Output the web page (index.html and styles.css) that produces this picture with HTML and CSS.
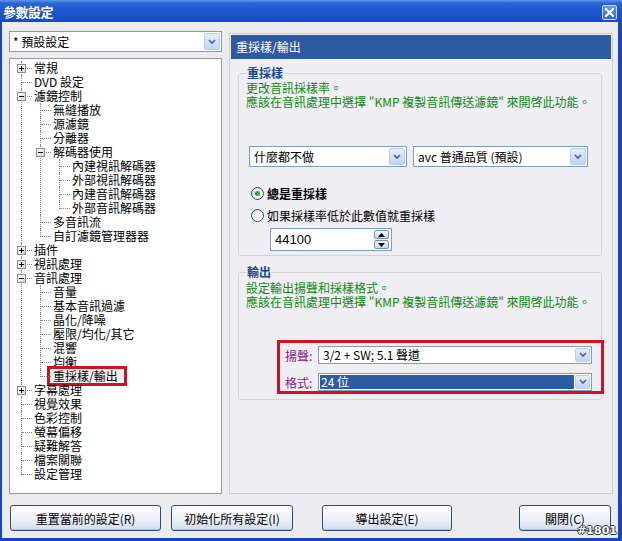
FILE: index.html
```html
<!DOCTYPE html>
<html lang="zh-Hant">

<head>
  <meta charset="UTF-8">
  <title>參數設定</title>
  <link rel="stylesheet" href="styles.css">
</head>

<body>
<div class="window">

  <!-- title bar -->
  <div class="titlebar">
    <span class="title">參數設定</span>
    <span class="close">
      <svg viewBox="0 0 10 10" width="9" height="9">
        <path d="M1 1 L9 9 M9 1 L1 9" stroke="#fff" stroke-width="2.4" stroke-linecap="square"></path>
      </svg>
    </span>
  </div>

  <div class="content">

    <!-- left side -->
    <div class="side">
      <div class="combo preset">
        <span class="combo-text">* 預設設定</span>
        <span class="drop"><svg viewBox="0 0 8 6" width="8" height="6"><path d="M1 1 L4 4 L7 1" fill="none" stroke="#4d6185" stroke-width="1.6"></path></svg></span>
      </div>

      <div class="tree">
        <ul>
          <li><div class="row"><span class="toggle plus"></span>常規</div></li>
          <li><div class="row">DVD 設定</div></li>
          <li><div class="row"><span class="toggle minus"></span>濾鏡控制</div>
            <ul>
              <li><div class="row">無縫播放</div></li>
              <li><div class="row">源濾鏡</div></li>
              <li><div class="row">分離器</div></li>
              <li><div class="row"><span class="toggle minus"></span>解碼器使用</div>
                <ul>
                  <li><div class="row">內建視訊解碼器</div></li>
                  <li><div class="row">外部視訊解碼器</div></li>
                  <li><div class="row">內建音訊解碼器</div></li>
                  <li><div class="row">外部音訊解碼器</div></li>
                </ul>
              </li>
              <li><div class="row">多音訊流</div></li>
              <li><div class="row">自訂濾鏡管理器器</div></li>
            </ul>
          </li>
          <li><div class="row"><span class="toggle plus"></span>插件</div></li>
          <li><div class="row"><span class="toggle plus"></span>視訊處理</div></li>
          <li><div class="row"><span class="toggle minus"></span>音訊處理</div>
            <ul>
              <li><div class="row">音量</div></li>
              <li><div class="row">基本音訊過濾</div></li>
              <li><div class="row">晶化/降噪</div></li>
              <li><div class="row">壓限/均化/其它</div></li>
              <li><div class="row">混響</div></li>
              <li><div class="row">均衡</div></li>
              <li><div class="row"><span class="selected">重採樣/輸出</span></div></li>
            </ul>
          </li>
          <li><div class="row"><span class="toggle plus"></span>字幕處理</div></li>
          <li><div class="row">視覺效果</div></li>
          <li><div class="row">色彩控制</div></li>
          <li><div class="row">螢幕偏移</div></li>
          <li><div class="row">疑難解答</div></li>
          <li><div class="row">檔案關聯</div></li>
          <li><div class="row">設定管理</div></li>
        </ul>
      </div>
    </div>

    <!-- right side -->
    <div class="panel">
      <div class="panel-head">重採樣/輸出</div>

      <fieldset class="group">
        <legend>重採樣</legend>
        <p class="note">更改音訊採樣率。<br>應該在音訊處理中選擇 "KMP 複製音訊傳送濾鏡" 來開啓此功能。</p>

        <div class="combo-row">
          <div class="combo mode">
            <span class="combo-text">什麼都不做</span>
            <span class="drop"><svg viewBox="0 0 8 6" width="8" height="6"><path d="M1 1 L4 4 L7 1" fill="none" stroke="#4d6185" stroke-width="1.6"></path></svg></span>
          </div>
          <div class="combo quality">
            <span class="combo-text">avc 普通品質 (預設)</span>
            <span class="drop"><svg viewBox="0 0 8 6" width="8" height="6"><path d="M1 1 L4 4 L7 1" fill="none" stroke="#4d6185" stroke-width="1.6"></path></svg></span>
          </div>
        </div>

        <div class="radio checked"><span class="dot"></span><b>總是重採樣</b></div>
        <div class="radio"><span class="dot"></span>如果採樣率低於此數值就重採樣</div>

        <div class="spin">
          <span class="spin-text">44100</span>
          <span class="spin-btns">
            <span class="spin-btn"><svg viewBox="0 0 7 4" width="7" height="4"><path d="M0 4 L3.5 0 L7 4 Z" fill="#000"></path></svg></span>
            <span class="spin-btn"><svg viewBox="0 0 7 4" width="7" height="4"><path d="M0 0 L3.5 4 L7 0 Z" fill="#000"></path></svg></span>
          </span>
        </div>
      </fieldset>

      <fieldset class="group output">
        <legend>輸出</legend>
        <p class="note">設定輸出揚聲和採樣格式。<br>應該在音訊處理中選擇 "KMP 複製音訊傳送濾鏡" 來開啓此功能。</p>

        <div class="mark">
          <div class="field">
            <span class="label">揚聲:</span>
            <div class="combo small">
              <span class="combo-text">3/2 + SW; 5.1 聲道</span>
              <span class="drop"><svg viewBox="0 0 8 6" width="8" height="6"><path d="M1 1 L4 4 L7 1" fill="none" stroke="#4d6185" stroke-width="1.6"></path></svg></span>
            </div>
          </div>
          <div class="field">
            <span class="label">格式:</span>
            <div class="combo small focus">
              <span class="combo-text">24 位</span>
              <span class="drop"><svg viewBox="0 0 8 6" width="8" height="6"><path d="M1 1 L4 4 L7 1" fill="none" stroke="#4d6185" stroke-width="1.6"></path></svg></span>
            </div>
          </div>
        </div>
      </fieldset>
    </div>
  </div>

  <!-- buttons -->
  <div class="buttons">
    <button class="btn reset">重置當前的設定(R)</button>
    <button class="btn init">初始化所有設定(I)</button>
    <button class="btn export">導出設定(E)</button>
    <button class="btn close-btn">關閉(C)</button>
  </div>

  <span class="stamp">#1801</span>
</div>
</body>

</html>
```

FILE: styles.css
```css
*,
*::before,
*::after {
  box-sizing: border-box;
}

body {
  margin: 0;
  font-family: "Noto Sans CJK TC", "Liberation Sans", sans-serif;
  font-size: 12px;
  color: #000;
}

.window {
  position: relative;
  width: 622px;
  height: 541px;
  display: flex;
  flex-direction: column;
  background: #ecebef;
  border: 3px solid #1548c0;
  border-top: 0;
  border-left-width: 2px;
  border-right-width: 4px;
}

/* title bar */

.titlebar {
  height: 22px;
  margin: 0 -4px 0 -2px;
  display: flex;
  align-items: center;
  justify-content: space-between;
  padding: 0 5px 0 3px;
  background: linear-gradient(#5d97ee 0, #2d66d6 3px, #1d55cc 50%, #164cc2 100%);
}

.title {
  color: #fff;
  font-weight: bold;
  font-size: 13px;
  letter-spacing: -0.5px;
}

.close {
  width: 15px;
  height: 15px;
  margin-top: 3px;
  display: grid;
  place-items: center;
  background: linear-gradient(#6b9ae8, #3468d0);
  border: 1px solid #c8d8f4;
  border-radius: 2px;
}

/* main area */

.content {
  display: grid;
  grid-template-columns: 213px 384px;
  gap: 7px;
  padding: 9px 0 0 7px;
  height: 472px;
}

.side {
  display: flex;
  flex-direction: column;
  gap: 6px;
}

.combo {
  display: flex;
  align-items: center;
  height: 21px;
  background: #fff;
  border: 1px solid #7f9db9;
  padding: 1px;
}

.combo-text {
  flex: 1;
  padding-left: 3px;
  white-space: nowrap;
  line-height: 15px;
}

.drop {
  width: 16px;
  height: 100%;
  display: grid;
  place-items: center;
  background: linear-gradient(#e6eefc, #c1d3fb);
  border: 1px solid #b8cbf3;
  border-radius: 2px;
}

.preset .combo-text {
  padding-left: 2px;
}

/* tree */

.tree {
  flex: 1;
  background: #fff;
  border: 1px solid #9a9a9a;
  padding-top: 2px;
}

.tree ul {
  list-style: none;
  margin: 0;
  padding: 0;
}

.tree ul ul {
  margin-left: 19px;
}

.tree li {
  position: relative;
}

.tree li::before {
  content: "";
  position: absolute;
  left: 11px;
  top: 0;
  bottom: 0;
  border-left: 1px dotted #8a8a8a;
}

.tree li:last-child::before {
  bottom: auto;
  height: 8px;
}

.row {
  position: relative;
  height: 14px;
  line-height: 14px;
  padding-left: 24px;
  white-space: nowrap;
}

.row::before {
  content: "";
  position: absolute;
  left: 12px;
  top: 7px;
  width: 10px;
  border-top: 1px dotted #8a8a8a;
}

.toggle {
  position: absolute;
  left: 7px;
  top: 3px;
  width: 9px;
  height: 9px;
  z-index: 1;
  background: linear-gradient(135deg, #fff, #d8d5cc);
  border: 1px solid #8c8c8c;
}

.toggle::before,
.toggle::after {
  content: "";
  position: absolute;
  background: #000;
}

.toggle::before {
  left: 1px;
  top: 3px;
  width: 5px;
  height: 1px;
}

.toggle.plus::after {
  left: 3px;
  top: 1px;
  width: 1px;
  height: 5px;
}

.selected {
  display: inline-block;
  margin-left: -3px;
  padding: 0 6px 0 3px;
  background: #f4f2f2;
  outline: 3px solid #d2121e;
}

/* right panel */

.panel {
  margin-top: 2px;
  height: 461px;
  border: 1px solid #cfced4;
  background: #efeef2;
  padding: 1px 1px 0 1px;
}

.panel-head {
  height: 24px;
  line-height: 24px;
  padding-left: 5px;
  background: #2e5aa4;
  color: #fff;
}

.group {
  margin: 7px 9px 0 7px;
  padding: 0 7px 4px 7px;
  border: 1px solid #d4d3da;
  border-radius: 3px;
  min-width: 0;
}

.group legend {
  padding: 0 1px;
  line-height: 14px;
  font-weight: bold;
  color: #1c4690;
}

.note {
  margin: 1px 0 0 0;
  line-height: 14px;
  color: #0f8a14;
  white-space: nowrap;
}

.combo-row {
  display: flex;
  gap: 6px;
  margin: 37px 0 0 3px;
}

.combo.mode {
  width: 158px;
}

.combo.quality {
  width: 175px;
}

.radio {
  display: flex;
  align-items: center;
  gap: 3px;
  height: 16px;
  margin-top: 6px;
  margin-left: 5px;
}

.radio.checked {
  margin-top: 18px;
}

.dot {
  width: 13px;
  height: 13px;
  display: grid;
  place-items: center;
  border: 1px solid #1d5281;
  border-radius: 50%;
  background: linear-gradient(135deg, #dcdcd6, #fff);
}

.radio.checked .dot::after {
  content: "";
  width: 5px;
  height: 5px;
  border-radius: 50%;
  background: #2fa52f;
}

.spin {
  display: flex;
  align-items: center;
  width: 122px;
  height: 23px;
  margin: 5px 0 0 24px;
  background: #fff;
  border: 1px solid #7f9db9;
  padding: 1px 2px 1px 1px;
}

.spin-text {
  flex: 1;
  padding-left: 3px;
  font-family: "Liberation Sans", sans-serif;
  font-size: 13px;
}

.spin-btns {
  display: flex;
  flex-direction: column;
  gap: 1px;
}

.spin-btn {
  width: 15px;
  height: 9px;
  display: grid;
  place-items: center;
  background: linear-gradient(#f4f6fb, #c9d4ea);
  border: 1px solid #7a8db0;
  border-radius: 2px;
}

/* output group */

.group.output {
  margin-top: 9px;
  padding-bottom: 5px;
}

.group.output .note {
  margin-top: 2px;
}

.mark {
  width: 327px;
  margin: 31px 0 0 31px;
  padding: 3px 9px 0 5px;
  border: 3px solid #d2121e;
  display: flex;
  flex-direction: column;
  gap: 9px;
}

.field {
  display: flex;
  align-items: center;
}

.label {
  width: 33px;
  color: #8a1a8a;
}

.combo.small {
  flex: 1;
  height: 18px;
}

.combo.small .combo-text {
  line-height: 14px;
}

.combo.small .drop {
  width: 15px;
}

.combo.focus .combo-text {
  height: 100%;
  margin-right: 1px;
  padding-left: 1px;
  background: #2d5ba6;
  color: #fff;
}

/* buttons */

.buttons {
  display: flex;
  padding: 11px 0 0 8px;
}

.btn {
  height: 26px;
  padding: 0;
  font: inherit;
  color: #000;
  background: linear-gradient(#ffffff, #f1f4fa 45%, #d2dcee);
  border: 1px solid #2b4d7c;
  border-radius: 3px;
  box-shadow: inset 0 -1px 0 #b3c2dd;
}

.reset {
  width: 151px;
}

.init {
  width: 122px;
  margin-left: 10px;
}

.export {
  width: 130px;
  margin-left: 29px;
}

.close-btn {
  width: 92px;
  margin-left: 67px;
}

.stamp {
  position: absolute;
  right: 1px;
  bottom: 1px;
  font-family: "DejaVu Sans", sans-serif;
  font-size: 11px;
  font-weight: bold;
  color: #fff;
  text-shadow: 1px 0 0 #333, -1px 0 0 #333, 0 1px 0 #333, 0 -1px 0 #333;
}
```
